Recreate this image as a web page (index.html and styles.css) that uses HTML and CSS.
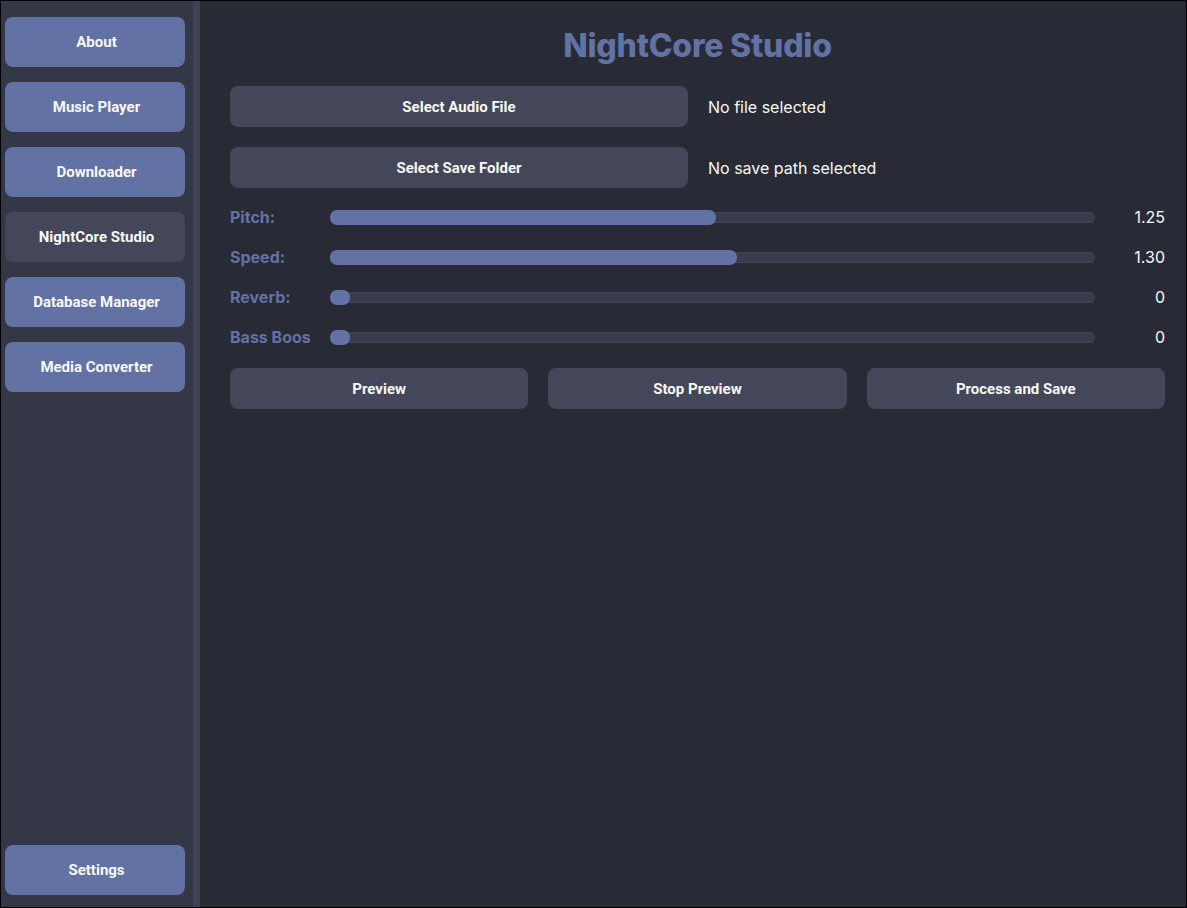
FILE: index.html
```html
<!DOCTYPE html>
<html lang="en">
<head>
<meta charset="utf-8">
<title>NightCore Studio</title>
<link rel="stylesheet" href="styles.css">
</head>
<body>
<div class="app">
  <aside class="sidebar">
    <nav class="nav">
      <button class="nav-btn">About</button>
      <button class="nav-btn">Music Player</button>
      <button class="nav-btn">Downloader</button>
      <button class="nav-btn active">NightCore Studio</button>
      <button class="nav-btn">Database Manager</button>
      <button class="nav-btn">Media Converter</button>
    </nav>
    <button class="nav-btn">Settings</button>
  </aside>
  <div class="divider"></div>
  <main class="main">
    <h1 class="title">NightCore Studio</h1>
    <div class="file-row">
      <button class="btn wide">Select Audio File</button>
      <span class="path">No file selected</span>
    </div>
    <div class="file-row">
      <button class="btn wide">Select Save Folder</button>
      <span class="path">No save path selected</span>
    </div>
    <div class="sliders">
      <div class="slider-row">
        <span class="s-label">Pitch:</span>
        <div class="track"><div class="fill" style="width: 50.6%"></div></div>
        <span class="s-value">1.25</span>
      </div>
      <div class="slider-row">
        <span class="s-label">Speed:</span>
        <div class="track"><div class="fill" style="width: 53.4%"></div></div>
        <span class="s-value">1.30</span>
      </div>
      <div class="slider-row">
        <span class="s-label">Reverb:</span>
        <div class="track"><div class="fill" style="width: 0%"></div></div>
        <span class="s-value">0</span>
      </div>
      <div class="slider-row">
        <span class="s-label">Bass Boost:</span>
        <div class="track"><div class="fill" style="width: 0%"></div></div>
        <span class="s-value">0</span>
      </div>
    </div>
    <div class="actions">
      <button class="btn">Preview</button>
      <button class="btn">Stop Preview</button>
      <button class="btn">Process and Save</button>
    </div>
  </main>
</div>
</body>
</html>
```

FILE: styles.css
```css
* { box-sizing: border-box; }
html, body { margin: 0; padding: 0; }
body {
  background: #000;
  font-family: Inter, "Noto Sans", sans-serif;
}
.app {
  width: 1187px;
  height: 908px;
  border: 1px solid #000;
  display: flex;
  background: #282a36;
}
.sidebar {
  width: 192px;
  background: #343746;
  padding: 16px 8px 12px 4px;
  display: flex;
  flex-direction: column;
  justify-content: space-between;
}
.nav {
  display: flex;
  flex-direction: column;
  gap: 15px;
}
.divider {
  width: 7px;
  background: #3f4255;
}
.nav-btn {
  width: 180px;
  height: 50px;
  border: none;
  border-radius: 8px;
  background: #6272a4;
  color: #f8f8f2;
  font-family: Roboto, Inter, sans-serif;
  font-weight: 700;
  font-size: 15px;
  padding: 0 0 0 3px;
}
.nav-btn.active { background: #44475a; }
.main {
  flex: 1;
  padding: 0 21px 0 30px;
  display: flex;
  flex-direction: column;
}
.title {
  margin: 25px 0 0;
  text-align: center;
  color: #6272a4;
  font-family: Inter, sans-serif;
  font-weight: 800;
  font-size: 32px;
  line-height: 40px;
  letter-spacing: -0.2px;
}
.file-row {
  display: flex;
  align-items: center;
  gap: 20px;
  margin-top: 20px;
}
.file-row:first-of-type { margin-top: 20px; }
.btn {
  height: 41px;
  border: none;
  border-radius: 8px;
  background: #44475a;
  color: #f8f8f2;
  font-family: Roboto, Inter, sans-serif;
  font-weight: 700;
  font-size: 15px;
  padding: 0;
}
.btn.wide { width: 458px; flex: none; }
.path {
  color: #f8f8f2;
  font-size: 16px;
}
.sliders {
  margin-top: 9px;
  display: flex;
  flex-direction: column;
}
.slider-row {
  height: 40px;
  display: flex;
  align-items: center;
}
.s-label {
  width: 80px;
  margin-right: 20px;
  overflow: hidden;
  white-space: nowrap;
  color: #6272a4;
  font-weight: 700;
  font-size: 16px;
}
.track {
  flex: 1;
  height: 11px;
  border-radius: 6px;
  background: #3a3c4e;
  border: 1px solid #43465a;
  position: relative;
}
.fill {
  position: absolute;
  left: -1px;
  top: -3px;
  height: 15px;
  min-width: 20px;
  border-radius: 7px;
  background: #6272a4;
}
.s-value {
  width: 70px;
  text-align: right;
  color: #f8f8f2;
  font-size: 16px;
}
.actions {
  margin-top: 11px;
  display: grid;
  grid-template-columns: 1fr 1fr 1fr;
  gap: 20px;
}
```
